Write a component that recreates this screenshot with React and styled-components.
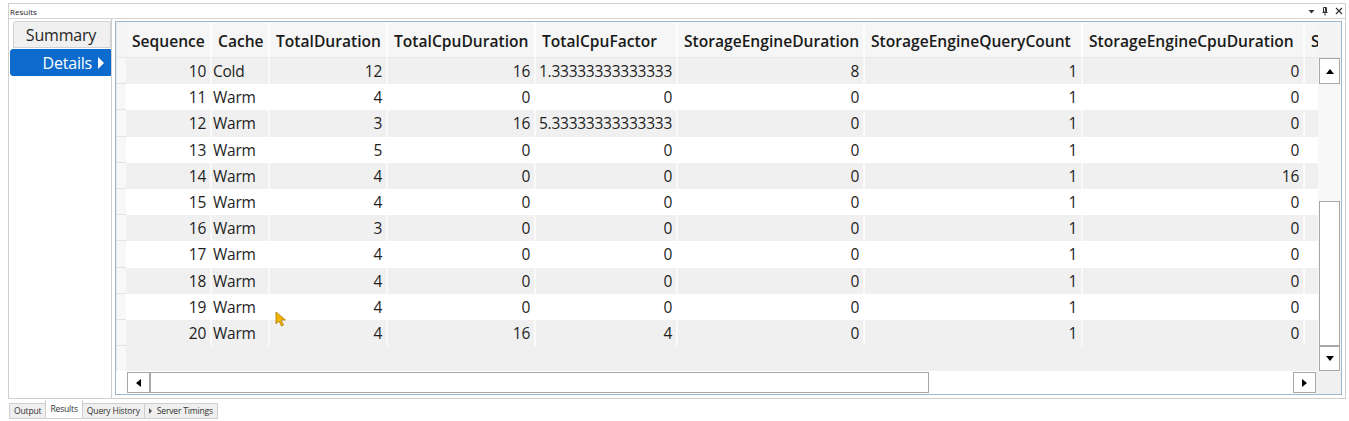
import styled, { createGlobalStyle } from 'styled-components';

const GlobalStyle = createGlobalStyle`
  html, body {
    margin: 0;
    padding: 0;
    background: #ffffff;
  }
  body {
    font-family: "Open Sans", "Noto Sans", sans-serif;
    color: #1e1e1e;
  }
`;

const Page = styled.div`
  width: 1349px;
  height: 421px;
  padding-top: 3px;
  box-sizing: border-box;
  overflow: hidden;
`;

const Window = styled.div`
  margin-left: 8px;
  width: 1338px;
  border: 1px solid #cfcfcf;
  box-sizing: border-box;
  background: #ffffff;
`;

const TitleBar = styled.div`
  height: 14px;
  display: flex;
  align-items: center;
  justify-content: space-between;
  border-bottom: 1px solid #d4d4d4;
  padding: 0 2px 0 1px;
  font-size: 8px;
  color: #222;
`;

const TitleIcons = styled.div`
  display: flex;
  align-items: center;
  gap: 7px;
  font-size: 9px;
  color: #333;
`;

const Content = styled.div`
  display: flex;
  height: 379px;
`;

const Sidebar = styled.div`
  width: 102px;
  border-right: 1px solid #cfcfcf;
  display: flex;
  flex-direction: column;
  padding-top: 2px;
`;

const SideTab = styled.div`
  height: 27px;
  margin-left: ${p => (p.$active ? '1px' : '4px')};
  margin-bottom: 1px;
  display: flex;
  align-items: center;
  justify-content: ${p => (p.$active ? 'flex-end' : 'center')};
  gap: 6px;
  padding-right: ${p => (p.$active ? '6px' : '2px')};
  font-size: 16px;
  background: ${p => (p.$active ? '#0c6bcc' : '#f0f0f0')};
  color: ${p => (p.$active ? '#ffffff' : '#262626')};
  border: 1px solid ${p => (p.$active ? '#0c6bcc' : '#d2d2d2')};
  border-radius: ${p => (p.$active ? '3px 0 0 3px' : '3px 0 0 0')};
  box-sizing: border-box;
  letter-spacing: -0.2px;
`;

const Grid = styled.div`
  margin: 2px 3px 3px 3px;
  flex: 1;
  border: 1px solid #9fb7cf;
  display: flex;
  flex-direction: column;
  background: #ffffff;
  position: relative;
  overflow: hidden;
`;

const Main = styled.div`
  display: flex;
  flex: 1;
  min-height: 0;
`;

const RowHeaderCol = styled.div`
  width: 10px;
  border-left: 1px solid #e6e6e6;
  box-sizing: border-box;
  display: flex;
  flex-direction: column;
  background: #f8f8f8;
`;

const Corner = styled.div`
  height: 36px;
  background: #f5f5f5;
  border-bottom: 1px solid #e8e8e8;
  box-sizing: border-box;
`;

const RowHeaderCell = styled.div`
  height: 26.2px;
  border-bottom: 1px solid #e2e2e2;
  box-sizing: border-box;
`;

const Viewport = styled.div`
  width: 1192px;
  overflow: hidden;
  display: flex;
  flex-direction: column;
  background: #f0f0f0;
`;

const Table = styled.div`
  display: grid;
  grid-template-columns: 86px 58px 118px 148px 142px 187px 218px 222px 60px;
  width: max-content;
`;

const HeadCell = styled.div`
  height: 36px;
  display: flex;
  align-items: center;
  padding: 3px 0 0 6px;
  font-size: 15.6px;
  font-weight: 600;
  color: #1a1a1a;
  white-space: nowrap;
  background: #f6f6f6;
  border-right: 2px solid #fdfdfd;
  border-bottom: 1px solid #e6e6e6;
  box-sizing: border-box;
  letter-spacing: 0;
`;

const Cell = styled.div`
  height: 26.2px;
  display: flex;
  align-items: center;
  justify-content: ${p => (p.$text ? 'flex-start' : 'flex-end')};
  padding: ${p => (p.$text ? '0 0 0 1px' : '0 4px 0 0')};
  font-size: 15.5px;
  white-space: nowrap;
  background: ${p => (p.$odd ? '#ffffff' : '#f0f0f0')};
  border-right: 2px solid ${p => (p.$odd ? '#ffffff' : '#fafafa')};
  box-sizing: border-box;
  color: #1e1e1e;
  letter-spacing: -0.25px;
`;

const VScrollCol = styled.div`
  width: 23px;
  display: flex;
  flex-direction: column;
  background: #f6f6f6;
`;

const HeadSpacer = styled.div`
  height: 36px;
  background: #f4f4f4;
  border-bottom: 1px solid #e6e6e6;
  box-sizing: border-box;
`;

const VTrack = styled.div`
  flex: 1;
  display: flex;
  flex-direction: column;
  padding: 0 1px 0 1px;
  background: #f8f8f8;
`;

const ScrollButton = styled.div`
  width: ${p => p.$w || '21px'};
  height: ${p => p.$h || '26px'};
  flex: none;
  background: #ffffff;
  border: 1px solid #aaa7a3;
  box-sizing: border-box;
  display: flex;
  align-items: center;
  justify-content: center;
`;

const Gap = styled.div`
  flex: ${p => p.$flex || 'none'};
  height: ${p => p.$h || 'auto'};
  width: ${p => p.$w || 'auto'};
`;

const Thumb = styled.div`
  background: #ffffff;
  border: 1px solid #aaa7a3;
  box-sizing: border-box;
  flex: none;
  width: ${p => p.$w || '21px'};
  height: ${p => p.$h || 'auto'};
`;

const HScrollRow = styled.div`
  height: 23px;
  display: flex;
  background: #ffffff;
`;

const HTrack = styled.div`
  display: flex;
  align-items: center;
  width: 1190px;
  background: #ffffff;
  padding-left: 1px;
  box-sizing: border-box;
`;

const ScrollCorner = styled.div`
  flex: 1;
  background: #f0f0f0;
`;

const Arrow = styled.span`
  width: 0;
  height: 0;
  border-style: solid;
  ${p =>
    p.$dir === 'up'
      ? 'border-width: 0 4.5px 5px 4.5px; border-color: transparent transparent #000 transparent;'
      : p.$dir === 'down'
      ? 'border-width: 5px 4.5px 0 4.5px; border-color: #000 transparent transparent transparent;'
      : p.$dir === 'left'
      ? 'border-width: 4.5px 5px 4.5px 0; border-color: transparent #000 transparent transparent;'
      : 'border-width: 4.5px 0 4.5px 5px; border-color: transparent transparent transparent #000;'}
`;

const WhiteArrow = styled.span`
  width: 0;
  height: 0;
  border-style: solid;
  border-width: 6px 0 6px 6px;
  border-color: transparent transparent transparent #ffffff;
`;

const Cursor = styled.svg`
  position: absolute;
  left: 159px;
  top: 289px;
`;

const TabBar = styled.div`
  display: flex;
  margin: 2px 0 0 9px;
  height: 19px;
`;

const BottomTab = styled.div`
  height: ${p => (p.$active ? '19px' : '16px')};
  margin-top: ${p => (p.$active ? '-1px' : '2px')};
  padding: 0 4px;
  display: flex;
  align-items: center;
  gap: 5px;
  font-size: 8.6px;
  letter-spacing: -0.2px;
  color: #333;
  background: ${p => (p.$active ? '#ffffff' : '#efefef')};
  border: 1px solid #cfcfcf;
  border-top: ${p => (p.$active ? 'none' : '1px solid #cfcfcf')};
  margin-right: -1px;
  box-sizing: border-box;
`;

const SmallArrow = styled.span`
  width: 0;
  height: 0;
  border-style: solid;
  border-width: 3px 0 3px 3px;
  border-color: transparent transparent transparent #555;
`;

const columns = [
  'Sequence',
  'Cache',
  'TotalDuration',
  'TotalCpuDuration',
  'TotalCpuFactor',
  'StorageEngineDuration',
  'StorageEngineQueryCount',
  'StorageEngineCpuDuration',
  'S',
];

const rows = [
  [10, 'Cold', 12, 16, '1.33333333333333', 8, 1, 0],
  [11, 'Warm', 4, 0, 0, 0, 1, 0],
  [12, 'Warm', 3, 16, '5.33333333333333', 0, 1, 0],
  [13, 'Warm', 5, 0, 0, 0, 1, 0],
  [14, 'Warm', 4, 0, 0, 0, 1, 16],
  [15, 'Warm', 4, 0, 0, 0, 1, 0],
  [16, 'Warm', 3, 0, 0, 0, 1, 0],
  [17, 'Warm', 4, 0, 0, 0, 1, 0],
  [18, 'Warm', 4, 0, 0, 0, 1, 0],
  [19, 'Warm', 4, 0, 0, 0, 1, 0],
  [20, 'Warm', 4, 16, 4, 0, 1, 0],
];

export default function App() {
  return (
    <Page>
      <GlobalStyle />
      <Window>
        <TitleBar>
          <span>Results</span>
          <TitleIcons>
            <svg width="7" height="5" viewBox="0 0 7 5">
              <path d="M0.5 1 L6.5 1 L3.5 4.5 Z" fill="#333" />
            </svg>
            <svg width="6" height="9" viewBox="0 0 6 9">
              <path d="M1.5 0.5 H4.5 V5 H1.5 Z M0.5 5.5 H5.5 M3 5.5 V8.5 M3.5 1 V4.5" fill="none" stroke="#333" strokeWidth="1" />
            </svg>
            <svg width="8" height="8" viewBox="0 0 8 8">
              <path d="M1 1 L7 7 M7 1 L1 7" stroke="#333" strokeWidth="1.2" />
            </svg>
          </TitleIcons>
        </TitleBar>
        <Content>
          <Sidebar>
            <SideTab>Summary</SideTab>
            <SideTab $active>
              Details <WhiteArrow />
            </SideTab>
          </Sidebar>
          <Grid>
            <Main>
              <RowHeaderCol>
                <Corner />
                {rows.map(r => (
                  <RowHeaderCell key={r[0]} />
                ))}
              </RowHeaderCol>
              <Viewport>
                <Table>
                  {columns.map(c => (
                    <HeadCell key={c}>{c}</HeadCell>
                  ))}
                  {rows.map((r, i) => [
                    ...r.map((v, j) => (
                      <Cell key={`${i}-${j}`} $odd={i % 2 === 1} $text={j === 1}>
                        {v}
                      </Cell>
                    )),
                    <Cell key={`${i}-s`} $odd={i % 2 === 1} />,
                  ])}
                </Table>
              </Viewport>
              <VScrollCol>
                <HeadSpacer />
                <VTrack>
                  <ScrollButton>
                    <Arrow $dir="up" />
                  </ScrollButton>
                  <Gap $h="117px" />
                  <Thumb $h="145px" />
                  <ScrollButton $h="25px">
                    <Arrow $dir="down" />
                  </ScrollButton>
                </VTrack>
              </VScrollCol>
            </Main>
            <HScrollRow>
              <Gap $w="10px" />
              <HTrack>
                <ScrollButton $w="23px" $h="21px">
                  <Arrow $dir="left" />
                </ScrollButton>
                <Thumb $w="779px" $h="21px" />
                <Gap $flex="1" />
                <ScrollButton $w="23px" $h="21px">
                  <Arrow $dir="right" />
                </ScrollButton>
              </HTrack>
              <ScrollCorner />
            </HScrollRow>
            <Cursor width="12" height="16" viewBox="0 0 12 16">
              <path d="M1 1 L1 13 L4 10 L6.5 15 L8.5 14 L6 9 L10.5 9 Z" fill="#f2b600" stroke="#b07a00" strokeWidth="0.8" />
            </Cursor>
          </Grid>
        </Content>
      </Window>
      <TabBar>
        <BottomTab>Output</BottomTab>
        <BottomTab $active>Results</BottomTab>
        <BottomTab>Query History</BottomTab>
        <BottomTab>
          <SmallArrow /> Server Timings
        </BottomTab>
      </TabBar>
    </Page>
  );
}
